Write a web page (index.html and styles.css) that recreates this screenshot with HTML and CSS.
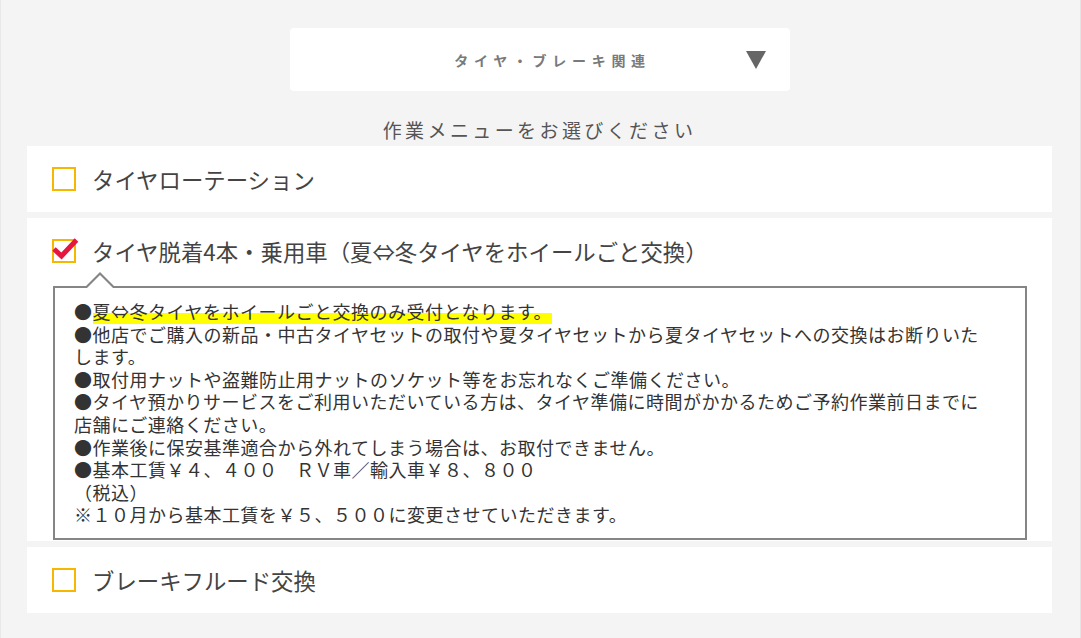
FILE: index.html
```html
<!DOCTYPE html>
<html lang="ja">

<head>
  <meta charset="UTF-8" />
  <meta name="viewport" content="width=device-width, initial-scale=1.0" />
  <title>作業メニュー</title>
  <link rel="stylesheet" href="styles.css">
</head>

<body>
  <div class="page">
    <div class="category">
      <span class="category-name">タイヤ・ブレーキ関連</span>
      <span class="category-arrow"></span>
    </div>

    <p class="menu-title">作業メニューをお選びください</p>

    <ul class="menu-list">
      <li class="menu-item">
        <label class="menu-label"><span class="check"></span>タイヤローテーション</label>
      </li>
      <li class="menu-item open">
        <label class="menu-label">
          <span class="check">
            <svg class="check-mark" viewBox="0 0 24 24" width="24" height="24">
              <path d="M2 10 L9.5 17 L24.5 1" fill="none" stroke="#e5173f" stroke-width="5" stroke-linecap="butt" stroke-linejoin="miter" />
            </svg>
          </span>タイヤ脱着4本・乗用車（夏⇔冬タイヤをホイールごと交換）
        </label>
        <div class="menu-note">
          <p>●<span class="marker">夏⇔冬タイヤをホイールごと交換のみ受付となります。</span></p>
          <p>●他店でご購入の新品・中古タイヤセットの取付や夏タイヤセットから夏タイヤセットへの交換はお断りいたします。</p>
          <p>●取付用ナットや盗難防止用ナットのソケット等をお忘れなくご準備ください。</p>
          <p>●タイヤ預かりサービスをご利用いただいている方は、タイヤ準備に時間がかかるためご予約作業前日までに店舗にご連絡ください。</p>
          <p>●作業後に保安基準適合から外れてしまう場合は、お取付できません。</p>
          <p>●基本工賃￥４、４００　ＲＶ車／輸入車￥８、８００</p>
          <p>（税込）</p>
          <p>※１０月から基本工賃を￥５、５００に変更させていただきます。</p>
        </div>
      </li>
      <li class="menu-item">
        <label class="menu-label"><span class="check"></span>ブレーキフルード交換</label>
      </li>
    </ul>
  </div>
</body>

</html>
```

FILE: styles.css
```css
/* Base */
* {
  box-sizing: border-box;
  margin: 0;
  padding: 0;
}

body {
  font-family: "Noto Sans CJK JP", "Noto Sans", sans-serif;
  background-color: #f4f4f4;
  color: #444;
}

.page {
  padding: 28px 28px 26px 26px;
  border-right: 1px solid #e4e4e4;
  border-left: 1px solid #e8e8e8;
  min-height: 638px;
}

/* Category select */
.category {
  position: relative;
  width: 500px;
  height: 63px;
  margin: 0 auto;
  background-color: #fff;
  border-radius: 4px;
  display: flex;
  align-items: center;
  justify-content: center;
  padding-left: 26px;
}

.category-name {
  font-size: 14px;
  font-weight: 700;
  letter-spacing: 5.7px;
  color: #7a7a7a;
}

.category-arrow {
  position: absolute;
  top: 23px;
  right: 24px;
  width: 0;
  height: 0;
  border-style: solid;
  border-width: 18px 10px 0 10px;
  border-color: #666 transparent transparent transparent;
}

.menu-title {
  margin: 27px 0 4px;
  text-align: center;
  font-size: 19px;
  line-height: 24px;
  letter-spacing: 3.4px;
  color: #555;
}

/* Menu rows */
.menu-list {
  list-style: none;
  display: flex;
  flex-direction: column;
  gap: 6px;
}

.menu-item {
  background-color: #fff;
  padding: 20px 25px;
}

.menu-item.open {
  padding-bottom: 1px;
}

.menu-label {
  display: flex;
  align-items: center;
  gap: 16px;
  font-size: 22.4px;
  line-height: 26px;
  color: #444;
  cursor: pointer;
}

.check {
  position: relative;
  flex-shrink: 0;
  width: 24px;
  height: 24px;
  border: 2px solid #f5b700;
  background-color: #fff;
}

.check-mark {
  position: absolute;
  top: -2px;
  left: -2px;
  overflow: visible;
}

/* Note box with pointer */
.menu-note {
  position: relative;
  margin: 22px 0 0 1px;
  border: 2px solid #858585;
  padding: 12px 31px 12px 19px;
  font-size: 18px;
  line-height: 22.6px;
  letter-spacing: 0.5px;
  color: #333;
}

.menu-note::before,
.menu-note::after {
  content: "";
  position: absolute;
  width: 0;
  height: 0;
  border-style: solid;
}

.menu-note::before {
  top: -16px;
  left: 29px;
  border-width: 0 16px 16px 16px;
  border-color: transparent transparent #858585 transparent;
}

.menu-note::after {
  top: -13px;
  left: 32px;
  border-width: 0 13px 13px 13px;
  border-color: transparent transparent #fff transparent;
}

.marker {
  background: linear-gradient(transparent 58%, #ffff00 58%);
}
```
